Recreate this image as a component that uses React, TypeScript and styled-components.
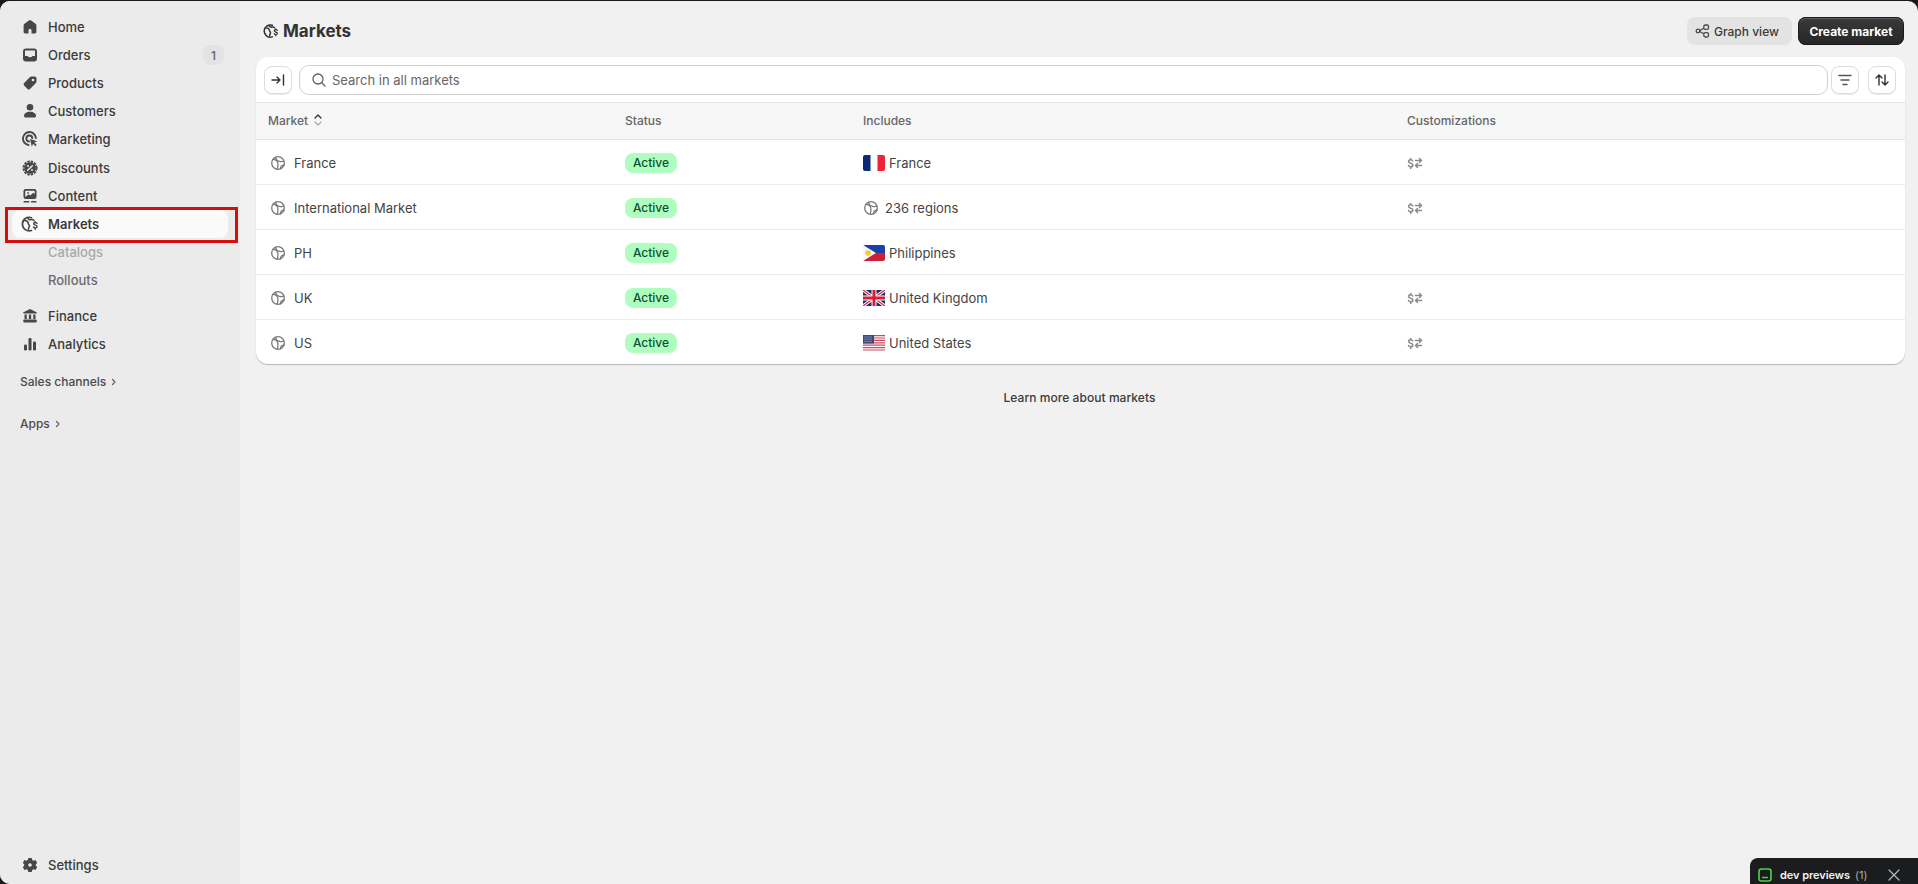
import styled, { createGlobalStyle } from "styled-components";
import React from "react";

const GlobalStyle = createGlobalStyle`
    html, body {
        margin: 0;
        height: 100%;
        background-color: #1a1a1a;
        overflow: hidden;
    }
    body {
        font-family: Inter, "Liberation Sans", sans-serif;
        color: #3a3a3a;
        -webkit-font-smoothing: antialiased;
    }
    svg { display: block; flex-shrink: 0; }
`;

const Frame = styled.div`
    margin-top: 1px;
    height: 883px;
    display: flex;
    border-radius: 10px;
    overflow: hidden;
    background-color: #f1f1f1;
`;

const Sidebar = styled.nav`
    width: 240px;
    flex-shrink: 0;
    box-sizing: border-box;
    padding: 12px 0 5px;
    display: flex;
    flex-direction: column;
    background-color: #ebebeb;
`;

const NavRow = styled.div<{ $active?: boolean; $gap?: number }>`
    position: relative;
    height: 28.12px;
    margin: ${(p) => p.$gap ?? 0}px 12px 0;
    padding: 0 4px 0 8px;
    display: flex;
    align-items: center;
    gap: 8px;
    border-radius: 8px;
    font-size: 13px;
    font-weight: ${(p) => (p.$active ? 600 : 500)};
    color: #3a3a3a;
    background-color: ${(p) => (p.$active ? "#fafafa" : "transparent")};
`;

const NavLabel = styled.span`
    flex: 1;
`;

const SubRow = styled.div<{ $muted?: boolean }>`
    height: 28.12px;
    margin: 0 12px;
    padding-left: 36px;
    display: flex;
    align-items: center;
    font-size: 13px;
    font-weight: 450;
    color: ${(p) => (p.$muted ? "#a8a8a8" : "#6b6b6b")};
`;

const Highlight = styled.span`
    position: absolute;
    top: -3px;
    left: -7px;
    right: -10px;
    bottom: -5px;
    border: 3px solid #d40d0d;
    pointer-events: none;
`;

const Count = styled.span`
    width: 21px;
    height: 20px;
    display: flex;
    align-items: center;
    justify-content: center;
    border-radius: 8px;
    background-color: #e3e3e3;
    font-size: 12px;
    font-weight: 450;
    color: #616161;
`;

const SectionRow = styled.div<{ $gap: number }>`
    height: 28px;
    margin-top: ${(p) => p.$gap}px;
    padding-left: 20px;
    display: flex;
    align-items: center;
    gap: 2px;
    font-size: 12px;
    font-weight: 500;
    color: #4a4a4a;
`;

const BottomRow = styled.div`
    margin-top: auto;
`;

const Main = styled.main`
    flex: 1;
    min-width: 0;
    padding: 0 13px 0 16px;
`;

const PageHeader = styled.header`
    height: 56px;
    box-sizing: border-box;
    padding: 16px 1px 12px 6px;
    display: flex;
    align-items: center;
    justify-content: space-between;
`;

const Title = styled.h1`
    margin: 0;
    display: flex;
    align-items: center;
    gap: 3px;
    font-size: 17px;
    font-weight: 650;
    color: #333333;
`;

const Actions = styled.div`
    display: flex;
    gap: 6px;
`;

const SecondaryButton = styled.button`
    width: 105px;
    height: 28px;
    padding: 0 0 0 8px;
    display: flex;
    align-items: center;
    gap: 3px;
    border: 0;
    border-radius: 8px;
    background-color: #e3e3e3;
    font: 500 12px Inter, sans-serif;
    color: #3a3a3a;
`;

const PrimaryButton = styled.button`
    width: 106px;
    height: 28px;
    padding: 0;
    border: 0;
    border-radius: 8px;
    background: linear-gradient(#3a3a3a, #262626);
    box-shadow: inset 0 0 0 1px #1a1a1a, inset 0 1px 0 1px rgba(255, 255, 255, 0.2);
    font: 650 12px Inter, sans-serif;
    color: #ffffff;
`;

const Card = styled.section`
    overflow: hidden;
    border-radius: 12px;
    background-color: #ffffff;
    box-shadow: 0 1px 1px rgba(0, 0, 0, 0.25);
`;

const Toolbar = styled.div`
    height: 45px;
    box-sizing: border-box;
    padding: 8px 9px 7px 8px;
    display: flex;
    align-items: center;
    gap: 7px;
`;

const IconButton = styled.button<{ $gap?: number }>`
    width: 28px;
    height: 28px;
    padding: 0;
    margin-left: ${(p) => p.$gap ?? 0}px;
    display: flex;
    align-items: center;
    justify-content: center;
    border: 1px solid #dcdcdc;
    border-radius: 8px;
    background-color: #ffffff;
    box-shadow: 0 1px 0 rgba(0, 0, 0, 0.08);
`;

const SearchBox = styled.div`
    flex: 1;
    height: 30px;
    box-sizing: border-box;
    margin-right: -4px;
    padding-left: 11px;
    display: flex;
    align-items: center;
    gap: 5px;
    border: 1px solid #d0d0d0;
    border-radius: 10px;
    font-size: 13px;
    font-weight: 400;
    color: #666666;
`;

const columns = "357px 238px 544px 1fr";

const HeadRow = styled.div`
    height: 38px;
    padding: 0 0 2px 12px;
    display: grid;
    grid-template-columns: ${columns};
    align-items: center;
    border-top: 1px solid #e3e3e3;
    border-bottom: 1px solid #e3e3e3;
    box-sizing: border-box;
    background-color: #f7f7f7;
    font-size: 12px;
    font-weight: 500;
    color: #666666;
`;

const HeadCell = styled.div`
    display: flex;
    align-items: center;
    gap: 4px;
`;

const Row = styled.div<{ $last?: boolean }>`
    height: ${(p) => (p.$last ? 44 : 45)}px;
    padding: 1px 0 0 12px;
    display: grid;
    grid-template-columns: ${columns};
    align-items: center;
    box-sizing: border-box;
    border-bottom: ${(p) => (p.$last ? "0" : "1px solid #ebebeb")};
    font-size: 13px;
    font-weight: 400;
    color: #444444;
`;

const MarketCell = styled.div`
    padding-left: 2px;
    display: flex;
    align-items: center;
    gap: 8px;
`;

const IncludesCell = styled.div<{ $icon?: boolean }>`
    display: flex;
    align-items: center;
    gap: ${(p) => (p.$icon ? 6 : 4)}px;
`;

const StatusBadge = styled.span`
    width: 52px;
    height: 20px;
    display: flex;
    align-items: center;
    justify-content: center;
    border-radius: 8px;
    background-color: #affebf;
    font-size: 12px;
    font-weight: 500;
    color: #0c5132;
`;

const LearnMore = styled.a`
    margin-top: 26px;
    display: block;
    text-align: center;
    font-size: 12px;
    font-weight: 500;
    letter-spacing: 0.05px;
    color: #3a3a3a;
    transform: translateX(-1px);
`;

const DevBar = styled.div`
    position: fixed;
    right: 0;
    bottom: 0;
    width: 168px;
    height: 26px;
    box-sizing: border-box;
    padding: 7px 18px 0 8px;
    display: flex;
    align-items: center;
    border-top-left-radius: 8px;
    background-color: #1a1c1d;
    font-size: 11px;
    font-weight: 600;
    letter-spacing: -0.05px;
    color: #f2f2f2;
`;

const DevLabel = styled.span`
    margin-left: 8px;
    flex: 1;
`;

const DevCount = styled.span`
    margin-left: 5px;
    font-weight: 400;
    color: #a8adb0;
`;

const dark = "#474747";
const gray = "#8a8a8a";

type IconProps = { size?: number; color?: string };

const HomeIcon = () => (
    <svg width="20" height="20" viewBox="0 0 20 20" fill={dark}>
        <path d="M8.800 3.400a2 2 0 0 1 2.400 0l4.300 3.300c.6.400.9 1 .9 1.700v6.400c0 1-.8 1.700-1.700 1.700h-3.200v-3.300a1.500 1.500 0 0 0-3 0v3.300H5.300c-1 0-1.700-.8-1.700-1.700V8.400c0-.7.3-1.300.9-1.700z" />
    </svg>
);

const OrdersIcon = () => (
    <svg width="20" height="20" viewBox="0 0 20 20">
        <rect x="3" y="3.500" width="14" height="13" rx="3" fill={dark} />
        <path d="M5 5.500h10v5.500h-2.600a2.500 1.800 0 0 1-4.800 0H5z" fill="#ebebeb" />
    </svg>
);

const ProductsIcon = () => (
    <svg width="20" height="20" viewBox="0 0 20 20" fill={dark}>
        <path fillRule="evenodd" d="M11.500 3.500h3.200c1 0 1.800.8 1.800 1.800v3.200c0 .6-.2 1.100-.6 1.500l-5.900 5.900a1.800 1.800 0 0 1-2.500 0l-3.400-3.400a1.800 1.800 0 0 1 0-2.500l5.900-5.900c.4-.4.9-.6 1.500-.6zm1.500 2.200a1.300 1.300 0 1 0 0 2.600 1.300 1.300 0 0 0 0-2.600z" />
    </svg>
);

const CustomersIcon = () => (
    <svg width="20" height="20" viewBox="0 0 20 20" fill={dark}>
        <circle cx="10" cy="6.300" r="3.300" />
        <path d="M4 15c0-2.600 2.400-4.300 6-4.300s6 1.700 6 4.300c0 .9-.7 1.500-1.500 1.500h-9C4.700 16.500 4 15.900 4 15z" />
    </svg>
);

const MarketingIcon = () => (
    <svg width="20" height="20" viewBox="0 0 20 20" fill="none">
        <path d="M8.500 16a6.500 6.500 0 1 1 7.400-7" stroke={dark} strokeWidth="1.900" strokeLinecap="round" />
        <path d="M9 12.500a3 3 0 1 1 3.300-3.500" stroke={dark} strokeWidth="1.900" strokeLinecap="round" />
        <path d="M10 10l7.300 2.300-3 1.300 2.400 2.500-1.200 1.200-2.400-2.500-1.300 3z" fill={dark} />
    </svg>
);

const DiscountsIcon = () => (
    <svg width="20" height="20" viewBox="0 0 20 20">
        <circle cx="10" cy="10" r="5.800" fill={dark} />
        <circle cx="10" cy="10" r="6.500" fill="none" stroke={dark} strokeWidth="2" strokeDasharray="2.400 1" />
        <path d="M12.300 7.700l-4.600 4.600" stroke="#ebebeb" strokeWidth="1.500" strokeLinecap="round" />
        <circle cx="8" cy="8" r="1" fill="#ebebeb" />
        <circle cx="12" cy="12" r="1" fill="#ebebeb" />
    </svg>
);

const ContentIcon = () => (
    <svg width="20" height="20" viewBox="0 0 20 20">
        <rect x="3.500" y="3" width="13" height="10" rx="2.200" fill={dark} />
        <path d="M5.200 11V5.800c0-.6.300-1 .9-1h7.800c.6 0 .9.400.9 1v2.200l-1.500-1.300-3 2.800-1.600-1.200z" fill="#ebebeb" />
        <circle cx="8" cy="6.800" r="0.900" fill={dark} />
        <rect x="3.500" y="15" width="6" height="1.600" rx="0.700" fill={dark} />
        <rect x="11" y="15" width="5.500" height="1.600" rx="0.700" fill={dark} />
    </svg>
);

const MarketsIcon = ({ size = 20, color = dark }: IconProps) => (
    <svg width={size} height={size} viewBox="0 0 20 20" fill="none">
        <path d="M11.500 3.700a6.800 6.800 0 1 0 0 12.800" stroke={color} strokeWidth="1.700" strokeLinecap="round" />
        <path d="M4.500 6.500c2.500.2 3.700 1.300 3.700 2.800 0 1.200 1.300 1.200 1.300 2.500 0 1-1 1.400-1 3.500" stroke={color} strokeWidth="1.600" strokeLinecap="round" />
        <path d="M8 3.800c.2 1.600 1.500 2.300 3.300 1.800 1.100-.3 2 .1 2.700.9" stroke={color} strokeWidth="1.600" strokeLinecap="round" />
        <path d="M17 9.400c-.4-.6-1-.9-1.700-.9-1 0-1.700.5-1.700 1.300 0 1.800 3.500.9 3.500 2.800 0 .8-.8 1.300-1.800 1.300-.7 0-1.400-.3-1.800-.9M15.300 7.600v1M15.300 13.900v1.300" stroke={color} strokeWidth="1.400" strokeLinecap="round" />
    </svg>
);

const FinanceIcon = () => (
    <svg width="20" height="20" viewBox="0 0 20 20" fill={dark}>
        <path d="M10 3l6.500 3.200c.6.300.4 1.200-.3 1.200H3.800c-.7 0-.9-.9-.3-1.200z" />
        <rect x="4.500" y="8.500" width="2.300" height="4.500" />
        <rect x="8.850" y="8.500" width="2.300" height="4.500" />
        <rect x="13.200" y="8.500" width="2.300" height="4.500" />
        <rect x="3.300" y="13.600" width="13.400" height="3" rx="0.800" />
    </svg>
);

const AnalyticsIcon = () => (
    <svg width="20" height="20" viewBox="0 0 20 20" fill={dark}>
        <rect x="4" y="10.500" width="3" height="6" rx="1.300" />
        <rect x="8.500" y="4" width="3" height="12.500" rx="1.300" />
        <rect x="13" y="7.500" width="3" height="9" rx="1.300" />
    </svg>
);

const SettingsIcon = () => (
    <svg width="20" height="20" viewBox="0 0 20 20" fill={dark}>
        <path fillRule="evenodd" d="M8.300 3h3.400l.5 1.900 1.500.8 1.900-.6 1.600 2.800-1.400 1.300v1.600l1.400 1.300-1.600 2.800-1.900-.6-1.500.8-.5 1.900H8.300l-.5-1.900-1.500-.8-1.900.6-1.600-2.800 1.400-1.300V9.200L2.800 7.900l1.600-2.800 1.900.6 1.500-.8zM10 8.200a1.800 1.800 0 1 0 0 3.600 1.800 1.800 0 0 0 0-3.600z" />
    </svg>
);

const ChevronRight = () => (
    <svg width="12" height="12" viewBox="0 0 12 12" fill="none">
        <path d="M4.500 3.500L7 6 4.500 8.500" stroke="#616161" strokeWidth="1.200" strokeLinecap="round" strokeLinejoin="round" />
    </svg>
);

const GraphIcon = () => (
    <svg width="16" height="16" viewBox="0 0 16 16" fill="none" stroke="#4a4a4a" strokeWidth="1.300">
        <circle cx="3" cy="8" r="1.800" />
        <rect x="8.800" y="2" width="4.700" height="4.400" rx="1.500" />
        <rect x="8.800" y="9.600" width="4.700" height="4.400" rx="1.500" />
        <path d="M4.800 7.500l4-2.300M4.800 8.500l4 2.300" />
    </svg>
);

const CollapseIcon = () => (
    <svg width="16" height="16" viewBox="0 0 16 16" fill="none" stroke="#303030" strokeWidth="1.400" strokeLinecap="round" strokeLinejoin="round">
        <path d="M2 8h8M7 5l3 3-3 3M13.500 3v10" />
    </svg>
);

const SearchIcon = () => (
    <svg width="16" height="16" viewBox="0 0 16 16" fill="none" stroke="#616161" strokeWidth="1.300" strokeLinecap="round">
        <circle cx="7" cy="7" r="5" />
        <path d="M10.800 10.800l3.200 3.200" />
    </svg>
);

const FilterIcon = () => (
    <svg width="16" height="16" viewBox="0 0 16 16" fill="none" stroke="#555555" strokeWidth="1.500" strokeLinecap="round">
        <path d="M2 3.500h12M4 8h8M6 12.500h4" />
    </svg>
);

const SortIcon = () => (
    <svg width="16" height="16" viewBox="0 0 16 16" fill="none" stroke="#303030" strokeWidth="1.400" strokeLinecap="round" strokeLinejoin="round">
        <path d="M5 13V3M2 6l3-3 3 3M11 3v10M8 10l3 3 3-3" />
    </svg>
);

const SortCaret = () => (
    <svg width="12" height="14" viewBox="0 0 12 14" fill="none" strokeWidth="1.300" strokeLinecap="round" strokeLinejoin="round">
        <path d="M3 5l3-3 3 3" stroke="#303030" />
        <path d="M3 9l3 3 3-3" stroke="#a8a8a8" />
    </svg>
);

const RegionIcon = () => (
    <svg width="16" height="16" viewBox="0 0 16 16" fill="none" stroke="#7a7a7a" strokeWidth="1.300" strokeLinecap="round">
        <circle cx="8" cy="8" r="6.300" />
        <path d="M3 4.300c2.800.2 4.300 1.500 4.800 3.500.4 1.900.1 4-.6 6.300" />
        <path d="M5.500 2.300c.4 2 2 3.500 4 4 1.600.4 3.200.3 4.500-.3" />
        <path d="M10.500 13.800c-.3-2.200 1-3.600 3.700-3.800" />
    </svg>
);

const CustomizeIcon = () => (
    <svg width="16" height="16" viewBox="0 0 16 16" fill="none" stroke={gray} strokeWidth="1.500" strokeLinecap="round" strokeLinejoin="round">
        <path d="M6.200 5c-.4-.8-1.100-1.200-2-1.200-1.200 0-2.100.6-2.100 1.700 0 2.300 4.300 1.200 4.300 3.500 0 1.100-1 1.800-2.200 1.800-1 0-1.900-.5-2.200-1.300M4.200 2.500v1.300M4.200 10.800v1.700" transform="translate(-.5 1)" />
        <path d="M8.500 5.500h6M12.500 3.500l2 2-2 2M14.500 10.500h-6M10.500 8.500l-2 2 2 2" />
    </svg>
);

const FlagFrance = () => (
    <svg width="22" height="16" viewBox="0 0 22 16">
        <rect width="22" height="16" rx="2" fill="#ffffff" />
        <path d="M2 0h5.500v16H2a2 2 0 0 1-2-2V2a2 2 0 0 1 2-2z" fill="#0a2a78" />
        <path d="M14.500 0H20a2 2 0 0 1 2 2v12a2 2 0 0 1-2 2h-5.500z" fill="#ee2436" />
    </svg>
);

const FlagPhilippines = () => (
    <svg width="22" height="16" viewBox="0 0 22 16">
        <path d="M2 0h18a2 2 0 0 1 2 2v6H0V2a2 2 0 0 1 2-2z" fill="#1a3fa8" />
        <path d="M0 8h22v6a2 2 0 0 1-2 2H2a2 2 0 0 1-2-2z" fill="#cf1f35" />
        <path d="M0 0l13 8-13 8z" fill="#f7f7f7" />
        <circle cx="5" cy="8" r="2.800" fill="#f9c92e" />
    </svg>
);

const FlagUK = () => (
    <svg width="22" height="16" viewBox="0 0 22 16">
        <rect width="22" height="16" rx="1.500" fill="#1c2a66" />
        <path d="M0 0l22 16M22 0L0 16" stroke="#ffffff" strokeWidth="3.200" />
        <path d="M0 0l22 16M22 0L0 16" stroke="#d21f3c" strokeWidth="1.200" />
        <path d="M11 0v16M0 8h22" stroke="#ffffff" strokeWidth="5" />
        <path d="M11 0v16M0 8h22" stroke="#d21f3c" strokeWidth="3" />
    </svg>
);

const FlagUS = () => (
    <svg width="22" height="16" viewBox="0 0 22 16">
        <rect width="22" height="16" fill="#ffffff" />
        <path d="M0 .6h22M0 3h22M0 5.400h22M0 7.800h22M0 10.200h22M0 12.600h22M0 15h22" stroke="#c9485b" strokeWidth="1.200" />
        <rect width="11" height="8.500" fill="#3b4a78" />
        <path d="M1.500 2h8M1.500 4.200h8M1.500 6.400h8" stroke="#c6cbdc" strokeWidth="0.900" strokeDasharray="1 1" />
    </svg>
);

const DevIcon = () => (
    <svg width="14" height="14" viewBox="0 0 14 14" fill="none">
        <rect x="1" y="1" width="12" height="12" rx="2.500" stroke="#4fd14f" strokeWidth="1.600" />
        <path d="M4.500 9.500h5" stroke="#4fd14f" strokeWidth="1.300" strokeLinecap="round" />
    </svg>
);

const CloseIcon = () => (
    <svg width="12" height="12" viewBox="0 0 12 12" fill="none" stroke="#b9bcbe" strokeWidth="1.200" strokeLinecap="round">
        <path d="M1 1l10 10M11 1L1 11" />
    </svg>
);

const navItems = [
    { label: "Home", icon: <HomeIcon /> },
    { label: "Orders", icon: <OrdersIcon />, count: 1 },
    { label: "Products", icon: <ProductsIcon /> },
    { label: "Customers", icon: <CustomersIcon /> },
    { label: "Marketing", icon: <MarketingIcon /> },
    { label: "Discounts", icon: <DiscountsIcon /> },
    { label: "Content", icon: <ContentIcon /> },
];

const markets = [
    { name: "France", includes: "France", flag: <FlagFrance />, custom: true },
    { name: "International Market", includes: "236 regions", flag: <RegionIcon />, custom: true, region: true },
    { name: "PH", includes: "Philippines", flag: <FlagPhilippines />, custom: false },
    { name: "UK", includes: "United Kingdom", flag: <FlagUK />, custom: true },
    { name: "US", includes: "United States", flag: <FlagUS />, custom: true },
];

const App = () => {
    return (
        <>
            <GlobalStyle />
            <Frame>
                <Sidebar>
                    {navItems.map((item) => (
                        <NavRow key={item.label}>
                            {item.icon}
                            <NavLabel>{item.label}</NavLabel>
                            {item.count && <Count>{item.count}</Count>}
                        </NavRow>
                    ))}
                    <NavRow $active>
                        <MarketsIcon />
                        <NavLabel>Markets</NavLabel>
                        <Highlight />
                    </NavRow>
                    <SubRow $muted>Catalogs</SubRow>
                    <SubRow>Rollouts</SubRow>
                    <NavRow $gap={8}>
                        <FinanceIcon />
                        <NavLabel>Finance</NavLabel>
                    </NavRow>
                    <NavRow>
                        <AnalyticsIcon />
                        <NavLabel>Analytics</NavLabel>
                    </NavRow>
                    <SectionRow $gap={9.5}>
                        Sales channels <ChevronRight />
                    </SectionRow>
                    <SectionRow $gap={14}>
                        Apps <ChevronRight />
                    </SectionRow>
                    <BottomRow>
                        <NavRow>
                            <SettingsIcon />
                            <NavLabel>Settings</NavLabel>
                        </NavRow>
                    </BottomRow>
                </Sidebar>
                <Main>
                    <PageHeader>
                        <Title>
                            <MarketsIcon size={18} color="#333333" />
                            Markets
                        </Title>
                        <Actions>
                            <SecondaryButton>
                                <GraphIcon />
                                Graph view
                            </SecondaryButton>
                            <PrimaryButton>Create market</PrimaryButton>
                        </Actions>
                    </PageHeader>
                    <Card>
                        <Toolbar>
                            <IconButton>
                                <CollapseIcon />
                            </IconButton>
                            <SearchBox>
                                <SearchIcon />
                                Search in all markets
                            </SearchBox>
                            <IconButton>
                                <FilterIcon />
                            </IconButton>
                            <IconButton $gap={2}>
                                <SortIcon />
                            </IconButton>
                        </Toolbar>
                        <HeadRow>
                            <HeadCell>
                                Market <SortCaret />
                            </HeadCell>
                            <HeadCell>Status</HeadCell>
                            <HeadCell>Includes</HeadCell>
                            <HeadCell>Customizations</HeadCell>
                        </HeadRow>
                        {markets.map((market, index) => (
                            <Row key={market.name} $last={index === markets.length - 1}>
                                <MarketCell>
                                    <RegionIcon />
                                    {market.name}
                                </MarketCell>
                                <div>
                                    <StatusBadge>Active</StatusBadge>
                                </div>
                                <IncludesCell $icon={market.region}>
                                    {market.flag}
                                    {market.includes}
                                </IncludesCell>
                                <div>{market.custom && <CustomizeIcon />}</div>
                            </Row>
                        ))}
                    </Card>
                    <LearnMore>Learn more about markets</LearnMore>
                </Main>
            </Frame>
            <DevBar>
                <DevIcon />
                <DevLabel>
                    dev previews
                    <DevCount>(1)</DevCount>
                </DevLabel>
                <CloseIcon />
            </DevBar>
        </>
    );
};

export default App;
